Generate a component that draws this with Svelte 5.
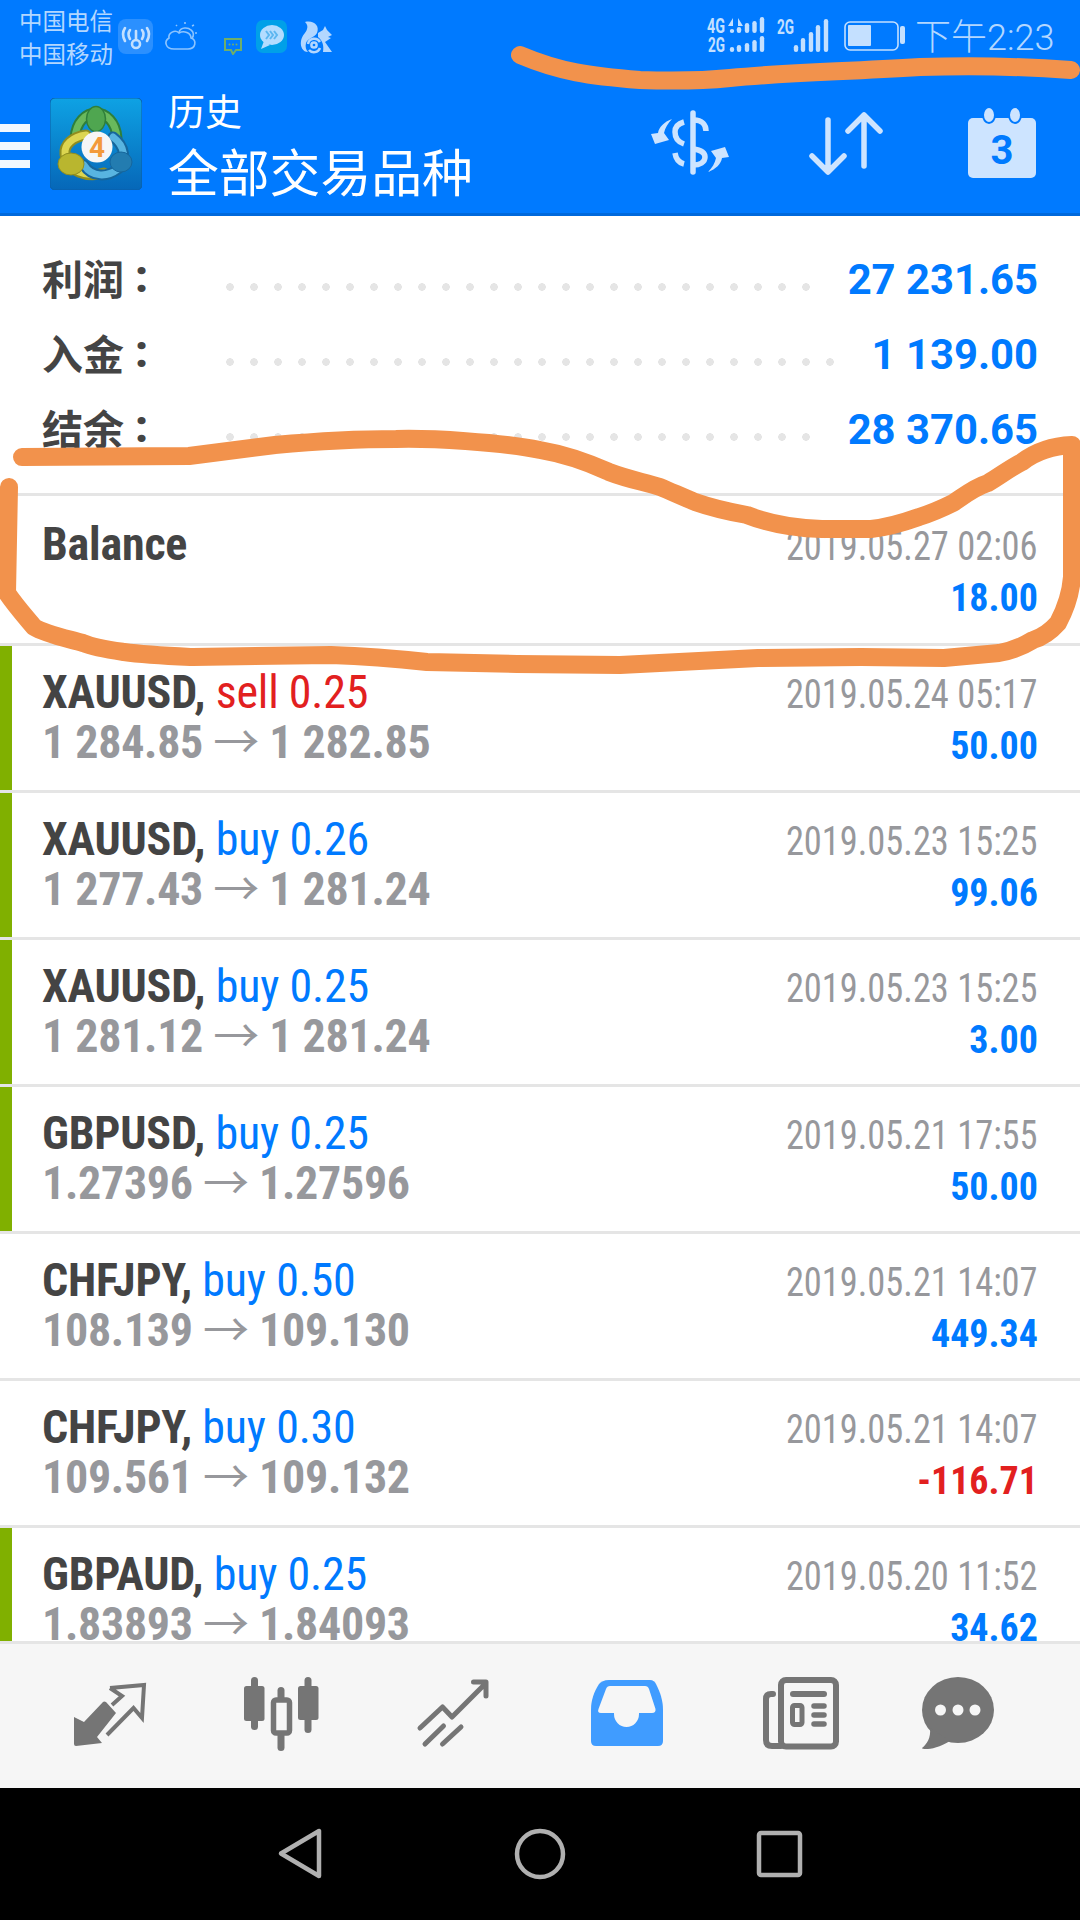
<script>
  const summary = [
    { label: "利润", value: "27 231.65" },
    { label: "入金", value: "1 139.00" },
    { label: "结余", value: "28 370.65" },
  ];

  const deals = [
    { symbol: "Balance", date: "2019.05.27 02:06", amount: "18.00" },
    { symbol: "XAUUSD", side: "sell", lots: "0.25", from: "1 284.85", to: "1 282.85", date: "2019.05.24 05:17", amount: "50.00", mark: true },
    { symbol: "XAUUSD", side: "buy", lots: "0.26", from: "1 277.43", to: "1 281.24", date: "2019.05.23 15:25", amount: "99.06", mark: true },
    { symbol: "XAUUSD", side: "buy", lots: "0.25", from: "1 281.12", to: "1 281.24", date: "2019.05.23 15:25", amount: "3.00", mark: true },
    { symbol: "GBPUSD", side: "buy", lots: "0.25", from: "1.27396", to: "1.27596", date: "2019.05.21 17:55", amount: "50.00", mark: true },
    { symbol: "CHFJPY", side: "buy", lots: "0.50", from: "108.139", to: "109.130", date: "2019.05.21 14:07", amount: "449.34" },
    { symbol: "CHFJPY", side: "buy", lots: "0.30", from: "109.561", to: "109.132", date: "2019.05.21 14:07", amount: "-116.71", loss: true },
    { symbol: "GBPAUD", side: "buy", lots: "0.25", from: "1.83893", to: "1.84093", date: "2019.05.20 11:52", amount: "34.62", mark: true },
  ];

  // [x, top, bottom] of every signal bar
  const signalBars = [
    [732, 29, 33], [739, 27, 33], [747, 23, 33], [754.5, 21, 33], [762, 17, 33],
    [732, 47, 52], [739, 45, 52], [747, 43, 52], [754.5, 40, 52], [762, 36, 52],
    [796, 45, 52], [803, 38, 52], [811, 32, 52], [818, 25, 52], [826, 19, 52],
  ];
</script>

<div class="screen">
  <!-- status bar -->
  <div class="status">
    <div class="carriers">
      <div>中国电信</div>
      <div>中国移动</div>
    </div>
    <svg class="notif" viewBox="118 15 216 40" width="216" height="40">
      <rect x="118" y="19" width="35" height="35" rx="8" fill="#2b90ff" />
      <g fill="none" stroke="#c4e0ff" stroke-width="2.6" stroke-linecap="round">
        <path d="M125 28 Q121 34 125 41 M130 30 Q127 34 130 39 M147 28 Q151 34 147 41 M142 30 Q145 34 142 39" />
        <path d="M136 31 V40" />
        <circle cx="136" cy="44" r="4" />
      </g>
      <g fill="none" stroke="#8cc4ff" stroke-width="1.6">
        <path d="M174 49 H188 C196 49 197 40 191 38 C191 33 184 30 179 33 C175 29 168 33 169 38 C164 41 165 49 174 49 Z" />
        <path d="M179 32 C181 27 188 27 191 30 C194 32 194 36 192 38" />
        <path d="M185 22 V24 M194 25 L192 26 M197 33 H195 M176 25 L177 26" />
      </g>
      <path d="M225 39 H241 V50 H236 L233 54 L231 50 H225 Z" fill="none" stroke="#6fae6a" stroke-width="2" />
      <circle cx="229.5" cy="44.5" r="1" fill="#6fae6a" /><circle cx="233" cy="44.5" r="1" fill="#6fae6a" /><circle cx="236.5" cy="44.5" r="1" fill="#6fae6a" />
      <rect x="256" y="20" width="31" height="33" rx="7" fill="#00a0e8" />
      <ellipse cx="272" cy="35" rx="12" ry="10" fill="#b3dcff" />
      <path d="M264 41 L261 49 L270 45 Z" fill="#b3dcff" />
      <path d="M266 31 L269 35 L266 39 M270 31 L273 35 L270 39 M274 31 L277 35 L274 39" fill="none" stroke="#5cb6f0" stroke-width="2" />
      <g fill="#b3d7ff">
        <path d="M305 22 C314 20 320 26 317 33 C314 38 308 38 306 43 C305 47 306 50 308 52 C303 52 300 47 301 41 C302 35 306 33 307 29 C308 26 307 24 305 22 Z" />
        <path d="M318 33 L323 30 L325 26 L327 30 L332 35 L328 37 L331 38 L325 42 L332 52 H323 C324 46 323 41 318 37 Z" />
      </g>
      <g fill="none" stroke="#b3d7ff" stroke-width="2.5">
        <circle cx="314" cy="45" r="2.6" />
        <path d="M308 44 A6.5 6.5 0 0 1 320 42 M320 48 A6.5 6.5 0 0 1 309 50" />
      </g>
    </svg>
    <svg class="net" viewBox="705 15 125 40" width="125" height="40">
      <g class="tiny" fill="#c4e0ff">
        <text x="707" y="33" textLength="18" lengthAdjust="spacingAndGlyphs">4G</text>
        <text x="708" y="52" textLength="17" lengthAdjust="spacingAndGlyphs">2G</text>
        <text x="777" y="34" textLength="17" lengthAdjust="spacingAndGlyphs">2G</text>
      </g>
      <g fill="#c4e0ff">
        {#each signalBars as [x, top, bottom]}
          <rect x={x - 2.2} y={top} width="4.4" height={bottom - top} rx="2.2" />
        {/each}
        <path d="M733 18 V26 H728 Z M738 18 V26 H743 Z" />
      </g>
    </svg>
    <svg class="battery" viewBox="843 20 63 32" width="63" height="32">
      <rect x="845" y="22" width="53" height="28" rx="5" fill="none" stroke="#c4e0ff" stroke-width="1.6" />
      <rect x="848" y="25" width="23" height="21" rx="1" fill="#c4e0ff" />
      <rect x="900" y="26" width="5" height="18" rx="2" fill="#c4e0ff" />
    </svg>
    <span class="time">下午2:23</span>
  </div>

  <!-- toolbar -->
  <div class="toolbar">
    <div class="burger"><span></span><span></span><span></span></div>
    <svg class="logo" viewBox="50 98 92 92" width="92" height="92">
      <defs>
        <linearGradient id="logoBg" x1="0" y1="0" x2="0" y2="1">
          <stop offset="0" stop-color="#0ea2e4" />
          <stop offset="1" stop-color="#0667b8" />
        </linearGradient>
      </defs>
      <rect x="50" y="98" width="92" height="92" rx="5" fill="url(#logoBg)" stroke="#0a5fa8" />
      <g fill="none" stroke-linecap="round">
        <path d="M75 138 C76 122 86 113 96 113 C106 113 116 122 117 138" stroke="#2f7f3a" stroke-width="11" />
        <path d="M75 138 C76 122 86 113 96 113 C106 113 116 122 117 138" stroke="#69b95c" stroke-width="7" />
        <path d="M86 135 C72 137 64 145 65 154 C67 172 88 178 104 173" stroke="#8f8d1f" stroke-width="11" />
        <path d="M86 135 C72 137 64 145 65 154 C67 172 88 178 104 173" stroke="#dcd550" stroke-width="7" />
        <path d="M113 137 C125 146 127 160 118 169 C108 177 92 178 84 165" stroke="#16669c" stroke-width="11" />
        <path d="M113 137 C125 146 127 160 118 169 C108 177 92 178 84 165" stroke="#58b4e0" stroke-width="7" />
      </g>
      <ellipse cx="96" cy="119" rx="9.5" ry="12.5" fill="#4fa650" stroke="#2f7f3a" stroke-width="1.5" />
      <ellipse cx="71" cy="164" rx="13" ry="11" fill="#b9b62f" stroke="#8f8d1f" />
      <ellipse cx="121" cy="162" rx="11" ry="10" fill="#237cb0" stroke="#16669c" />
      <circle cx="97" cy="147" r="15.5" fill="#f6f6f6" />
      <text class="four" x="97" y="157" text-anchor="middle">4</text>
    </svg>
    <div class="titles">
      <div class="sub">历史</div>
      <div class="main">全部交易品种</div>
    </div>
    <svg class="act dollar" viewBox="650 110 82 66" width="82" height="66">
      <g fill="none" stroke="#cde4ff" stroke-width="5.5">
        <path d="M693 113 V172" stroke-linecap="round" />
        <path d="M684 122 C677 124 675 128 675 132 C675 138 678 142 684 144" />
        <path d="M694 120 C702 120 706 125 706 131" />
        <path d="M675 153 C676 160 680 163 684 164" />
        <path d="M693 149 C701 150 705 153 705 157 C705 162 700 165 693 165" />
      </g>
      <path d="M672 119 C664 122 659 127 658 133 L651 134 L655 144 L669 140 L664 133 C665 128 668 123 672 119 Z" fill="#cde4ff" />
      <path d="M672 119 C664 122 659 127 658 133 L651 134 L655 144 L669 140 L664 133 C665 128 668 123 672 119 Z" fill="#cde4ff" transform="rotate(180 690 145.5)" />
    </svg>
    <svg class="act arrows" viewBox="808 110 76 66" width="76" height="66">
      <path d="M828 120 V171 M812 156 L828 172 L844 156 M864 166 V115 M848 131 L864 115 L880 131" fill="none" stroke="#cde4ff" stroke-width="5.5" stroke-linecap="round" stroke-linejoin="round" />
    </svg>
    <svg class="act calendar" viewBox="966 104 72 78" width="72" height="78">
      <rect x="968" y="118" width="68" height="60" rx="5" fill="#cde4ff" />
      <ellipse cx="989" cy="115" rx="6" ry="8" fill="#cde4ff" stroke="#007aff" stroke-width="2" />
      <ellipse cx="1015" cy="115" rx="6" ry="8" fill="#cde4ff" stroke="#007aff" stroke-width="2" />
      <text class="day" x="1002" y="164" text-anchor="middle">3</text>
    </svg>
  </div>

  <!-- account totals -->
  <div class="summary">
    {#each summary as row}
      <div class="sumrow">
        <span class="label">{row.label}<b>:</b></span>
        <span class="dots"></span>
        <span class="value">{row.value}</span>
      </div>
    {/each}
  </div>

  <!-- deals -->
  <ul class="deals">
    {#each deals as d}
      <li class="deal" class:mark={d.mark}>
        <div class="left">
          <div class="head">
            {#if d.side}
              <b>{d.symbol},</b> <span class={d.side}>{d.side} {d.lots}</span>
            {:else}
              <b>{d.symbol}</b>
            {/if}
          </div>
          {#if d.from}
            <div class="price">{d.from} <i>→</i> {d.to}</div>
          {/if}
        </div>
        <div class="right">
          <div class="date">{d.date}</div>
          <div class="amount" class:loss={d.loss}>{d.amount}</div>
        </div>
      </li>
    {/each}
  </ul>

  <!-- tab bar -->
  <nav class="tabs">
    <svg viewBox="25 1676 171 80" width="171" height="80">
      <path d="M74 1717 L84 1722 L103 1702 Q104 1701 106 1702 L116 1713 L97 1737 L102 1743 L76 1746 Q74 1746 74 1744 Z" fill="#757575" />
      <path d="M110 1688 L144 1685 L142 1718 L133.5 1708 L107 1735 M110 1688 L122 1696 L112 1705" fill="none" stroke="#757575" stroke-width="4" />
    </svg>
    <svg viewBox="196 1676 171 80" width="171" height="80">
      <g fill="#757575">
        <rect x="251" y="1677" width="7" height="53" rx="3.5" />
        <rect x="244" y="1686" width="20.5" height="35" rx="2.5" />
        <rect x="277.5" y="1687" width="7" height="64" rx="3.5" />
        <rect x="304.5" y="1677" width="7" height="56" rx="3.5" />
        <rect x="298" y="1686" width="20.5" height="34" rx="2.5" />
      </g>
      <rect x="273.5" y="1700" width="16" height="33" rx="2.5" fill="#f6f6f6" stroke="#757575" stroke-width="5.5" />
    </svg>
    <svg viewBox="367 1676 173 80" width="173" height="80">
      <path d="M420 1728 L442.5 1707 L452 1717 L485 1684 M473.5 1682 H486 V1696 M425 1744 L443.5 1726 M442.5 1744 L461 1727" fill="none" stroke="#757575" stroke-width="5" stroke-linecap="round" stroke-linejoin="round" />
    </svg>
    <svg viewBox="540 1676 173 80" width="173" height="80">
      <path fill="#409cff" d="M609 1680 H650 C653 1680 655 1682 656 1684 C660 1692 663 1700 663 1710 V1741 Q663 1746 658 1746 H596 Q591 1746 591 1741 V1710 C591 1700 594 1692 599 1684 C601 1682 604 1680 609 1680 Z" />
      <path fill="#f6f6f6" d="M610 1686 H645 Q648 1686 649 1689 L655.5 1709 Q656 1713 652 1713 H639 V1714 A12.5 13 0 0 1 614 1714 V1713 H601 Q597 1713 598.5 1709 L606 1689 Q607 1686 610 1686 Z" />
    </svg>
    <svg viewBox="713 1676 166 80" width="166" height="80">
      <g fill="none" stroke="#757575" stroke-linecap="round">
        <rect x="781" y="1680" width="55" height="66.5" rx="5" stroke-width="6" />
        <path d="M773 1694 H771 Q766 1694 766 1699 V1740 Q766 1746 772 1746 H781" stroke-width="6" />
        <path d="M793 1694 H824" stroke-width="6" />
        <rect x="792.5" y="1705.5" width="9.5" height="19" rx="2" stroke-width="5" />
        <path d="M814 1706 H824 M814 1715 H824 M814 1724 H824" stroke-width="5.5" />
      </g>
    </svg>
    <svg viewBox="879 1676 161 80" width="161" height="80">
      <ellipse cx="958" cy="1710" rx="36" ry="33" fill="#757575" />
      <path d="M930 1728 C931 1738 927 1744 922 1748 C922 1750 936 1750 950 1741 Z" fill="#757575" />
      <circle cx="940.5" cy="1710" r="5.5" fill="#f6f6f6" />
      <circle cx="958" cy="1710" r="5.5" fill="#f6f6f6" />
      <circle cx="975" cy="1710" r="5.5" fill="#f6f6f6" />
    </svg>
  </nav>

  <!-- android buttons -->
  <div class="softkeys">
    <svg viewBox="275 1825 50 58" width="50" height="58">
      <path d="M319 1831 V1876 L281 1853.5 Z" fill="none" stroke="#b0b0b0" stroke-width="4.5" stroke-linejoin="round" />
    </svg>
    <svg viewBox="513 1826 54 54" width="54" height="54">
      <circle cx="540" cy="1853" r="23" fill="none" stroke="#b0b0b0" stroke-width="4.5" />
    </svg>
    <svg viewBox="756 1829 50 50" width="50" height="50">
      <rect x="760" y="1833" width="41" height="42" rx="2" fill="none" stroke="#b0b0b0" stroke-width="4.5" />
    </svg>
  </div>

  <!-- pen marks drawn over the screenshot -->
  <svg class="scribble" viewBox="0 0 1080 1920" width="1080" height="1920">
    <g fill="none" stroke="#f2924c" stroke-width="18" stroke-linecap="round" stroke-linejoin="round">
      <path d="M520 55 C560 72 590 76 640 80 C670 81 700 81 730 78 C790 72 840 72 920 67 C960 66 1020 66 1071 70" />
      <path d="M22 457 L189 456 L275 445 C320 441 360 439 396 439 C430 438 500 442 540 450 C575 456 600 468 609 472 C630 480 645 482 660 487 C672 492 685 498 695 502 C715 509 730 512 747 515 C765 522 790 528 822 529 L871 529 C890 527 905 522 919 517 C935 512 945 507 953 503 C965 495 975 487 988 483 C1000 476 1010 468 1022 462 C1035 452 1050 446 1072 445 V577 C1071 590 1066 608 1058 623 C1050 632 1043 637 1033 640 C1020 648 1010 651 999 653 L944 658 L861 657 L758 658 L620 665 L517 664 L427 662 C390 658 360 656 331 655 L193 657 C170 656 145 655 124 652 C110 650 95 648 83 643 C65 638 45 634 34 627 C24 615 15 605 7 593 L9 487" />
    </g>
  </svg>
</div>

<style>
  :global(body) {
    margin: 0;
  }

  .screen {
    position: relative;
    width: 1080px;
    height: 1920px;
    display: flex;
    flex-direction: column;
    overflow: hidden;
    background: #fff;
    font-family: Roboto, "Noto Sans CJK SC", sans-serif;
  }

  svg {
    display: block;
    flex: none;
  }

  /* ----- status bar ----- */

  .status {
    height: 88px;
    flex: none;
    display: flex;
    align-items: flex-start;
    background: #007aff;
    color: #b3d7ff;
  }

  .carriers {
    width: 99px;
    margin: 4px 0 0 19px;
    font: 23.5px/33px "Noto Sans CJK SC", sans-serif;
    white-space: nowrap;
  }

  .notif {
    margin-top: 15px;
  }

  .net {
    margin: 15px 0 0 371px;
  }

  .battery {
    margin: 20px 0 0 13px;
  }

  .time {
    margin: 15px 0 0 9px;
    font: 300 36px/46px Roboto, "Noto Sans CJK SC", sans-serif;
    white-space: nowrap;
  }

  .tiny text {
    font: 700 20px Roboto, sans-serif;
  }

  /* ----- toolbar ----- */

  .toolbar {
    height: 125px;
    flex: none;
    display: flex;
    align-items: flex-start;
    background: #007aff;
    border-bottom: 3px solid #0069dc;
    color: #fff;
    font-family: "Noto Sans CJK SC", sans-serif;
  }

  .burger {
    width: 30px;
    margin-top: 36px;
    display: flex;
    flex-direction: column;
    gap: 10px;
  }

  .burger span {
    height: 8px;
    background: #f2f8ff;
  }

  .logo {
    margin: 10px 0 0 20px;
  }

  .four {
    font: 700 28px Roboto, sans-serif;
    fill: #f39a3a;
  }

  .titles {
    width: 482px;
    margin-left: 26px;
    white-space: nowrap;
  }

  .sub {
    font-size: 37px;
    line-height: 44px;
  }

  .main {
    margin-top: 6px;
    font-size: 50.8px;
    line-height: 64px;
  }

  .dollar {
    margin-top: 22px;
  }

  .arrows {
    margin: 22px 0 0 76px;
  }

  .calendar {
    margin: 16px 0 0 82px;
  }

  .day {
    font: 700 40px Roboto, sans-serif;
    fill: #007aff;
  }

  /* ----- summary ----- */

  .summary {
    height: 277px;
    flex: none;
    box-sizing: border-box;
    padding: 26px 42px 0;
  }

  .sumrow {
    height: 75px;
    display: flex;
    align-items: center;
  }

  .label {
    width: 184px;
    flex: none;
    display: flex;
    gap: 11px;
    margin-bottom: 4px;
    font: 700 41px/71px "Noto Sans CJK SC", sans-serif;
    color: #444;
  }

  .label b {
    font-family: Roboto, sans-serif;
    font-size: 44px;
    font-weight: 900;
  }

  .dots {
    flex: 1;
    height: 8px;
    margin: 14px 26px 0 0;
    background: radial-gradient(circle at 4px 4px, #e5e5e5 3.6px, transparent 4px) left / 24px 8px repeat-x;
  }

  .value {
    font-size: 41.8px;
    font-weight: 700;
    color: #007aff;
    white-space: nowrap;
  }

  /* ----- deal list ----- */

  .deals {
    flex: 1;
    min-height: 0;
    margin: 0;
    padding: 0;
    list-style: none;
    overflow: hidden;
  }

  .deal {
    height: 147px;
    box-sizing: border-box;
    border-top: 3px solid #e5e5e5;
    padding: 21px 42px 0;
    display: flex;
    justify-content: space-between;
  }

  .deal:first-child {
    height: 150px;
    padding-top: 23px;
  }

  .mark {
    box-shadow: inset 12px 0 0 #80b000;
  }

  .left,
  .right {
    font-stretch: 75%;
    white-space: nowrap;
  }

  .head,
  .price,
  .date,
  .amount {
    height: 50px;
    line-height: 50px;
  }

  .head {
    font-size: 46px;
    letter-spacing: -0.2px;
    color: #444;
  }

  .sell {
    color: #e2201f;
  }

  .buy {
    color: #007aff;
  }

  .price {
    font-size: 46px;
    font-weight: 700;
    letter-spacing: -0.3px;
    color: #97989c;
  }

  .price i {
    font-style: normal;
    font-weight: 400;
  }

  .right {
    text-align: right;
  }

  .date {
    margin-top: 3px;
    font-size: 40px;
    color: #97989c;
    transform: scaleX(0.91);
    transform-origin: right;
  }

  .amount {
    margin-top: 1px;
    font-size: 38px;
    font-weight: 700;
    color: #007aff;
  }

  .loss {
    color: #e2201f;
  }

  /* ----- bottom ----- */

  .tabs {
    height: 147px;
    flex: none;
    box-sizing: border-box;
    border-top: 3px solid #e5e5e5;
    background: #f6f6f6;
    display: flex;
    align-items: center;
    padding-left: 25px;
  }

  .softkeys {
    height: 132px;
    flex: none;
    background: #000;
    display: flex;
    align-items: center;
    padding-left: 275px;
    gap: 188px;
  }

  .scribble {
    position: absolute;
    left: 0;
    top: 0;
    pointer-events: none;
  }
</style>
